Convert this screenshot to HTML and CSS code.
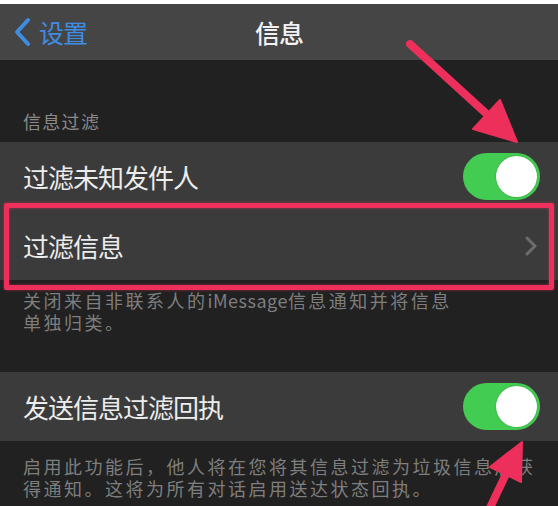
FILE: index.html
```html
<!DOCTYPE html>
<html lang="zh-CN">
<head>
<meta charset="utf-8">
<title>信息</title>
<link rel="stylesheet" href="styles.css">
</head>
<body>
<div class="screen">
  <div class="top-strip"></div>
  <header class="nav">
    <div class="back">
      <svg class="back-chevron" width="20" height="30" viewBox="0 0 20 30"><path d="M16 3 L5 15 L16 27" fill="none" stroke="#3f8de2" stroke-width="4" stroke-linecap="round" stroke-linejoin="round"/></svg>
      <span class="back-label">设置</span>
    </div>
    <div class="nav-title">信息</div>
    <div></div>
  </header>

  <div class="section-header">信息过滤</div>
  <div class="group">
    <div class="row">
      <span class="row-label">过滤未知发件人</span>
      <span class="toggle"><span class="knob"></span></span>
    </div>
    <div class="row row-highlight">
      <span class="row-label">过滤信息</span>
      <svg class="chevron" width="14" height="20" viewBox="0 0 14 20"><path d="M3 2 L11 10 L3 18" fill="none" stroke="#6c6c6c" stroke-width="3" stroke-linecap="round" stroke-linejoin="round"/></svg>
      <div class="annot-box"></div>
    </div>
  </div>
  <div class="footer footer-first">关闭来自非联系人的<span class="latin">iMessage</span>信息通知并将信息<br>单独归类。</div>

  <div class="group group-second">
    <div class="row">
      <span class="row-label">发送信息过滤回执</span>
      <span class="toggle"><span class="knob"></span></span>
    </div>
  </div>
  <div class="footer footer-second">启用此功能后，他人将在您将其信息过滤为垃圾信息后获<br>得通知。这将为所有对话启用送达状态回执。</div>

  <svg class="arrows" width="558" height="506" viewBox="0 0 558 506">
    <g fill="#ec2f5b" stroke="#ec2f5b" stroke-linejoin="round">
      <line x1="410" y1="44" x2="490" y2="117" stroke-width="8" stroke-linecap="round"/>
      <polygon points="517,142 473,129 500,100" stroke-width="2"/>
      <line x1="488" y1="512" x2="507" y2="472" stroke-width="8"/>
      <polygon points="522,442 521,482 490,467" stroke-width="2"/>
    </g>
  </svg>
</div>
</body>
</html>
```
FILE: styles.css
```css
html, body {
  margin: 0;
  padding: 0;
}
body {
  background: #222222;
  font-family: "Noto Sans CJK SC", "Noto Sans", sans-serif;
}
.screen {
  position: relative;
  width: 558px;
  height: 506px;
  overflow: hidden;
  background: #212121;
}
.top-strip {
  height: 4px;
  background: #ffffff;
}
.nav {
  height: 56px;
  background: #454545;
  display: grid;
  grid-template-columns: 1fr auto 1fr;
  align-items: center;
}
.back {
  display: flex;
  align-items: center;
  padding-left: 12px;
  gap: 7px;
  color: #3f8de2;
}
.back-chevron {
  display: block;
}
.back-label {
  font-size: 25px;
  letter-spacing: -1px;
  line-height: 30px;
}
.nav-title {
  color: #f2f2f2;
  font-size: 25px;
  font-weight: 500;
  letter-spacing: -1px;
  line-height: 30px;
}
.section-header {
  padding: 50px 23px 10px;
  font-size: 18px;
  line-height: 22px;
  letter-spacing: 1.3px;
  color: #8a8a8a;
}
.group {
  background: #3b3b3b;
}
.row {
  position: relative;
  height: 69px;
  display: flex;
  align-items: center;
  justify-content: space-between;
  padding: 0 18px 0 23px;
}
.row-label {
  font-size: 26px;
  letter-spacing: -1px;
  color: #ececec;
}
.toggle {
  position: relative;
  width: 77px;
  height: 47px;
  border-radius: 24px;
  background: #43cc52;
  display: flex;
  align-items: center;
  justify-content: flex-end;
  padding-right: 3px;
  box-sizing: border-box;
}
.knob {
  width: 41px;
  height: 41px;
  border-radius: 50%;
  background: #ffffff;
  box-shadow: 0 0 2px rgba(0,0,0,0.25);
}
.chevron {
  display: block;
  margin-right: 2px;
}
.annot-box {
  position: absolute;
  top: -8px;
  bottom: -10px;
  left: 4px;
  right: 4px;
  border: 5px solid #ec2f5b;
  border-radius: 2px;
  box-shadow: 0 0 3px rgba(236,47,91,0.6), inset 0 0 3px rgba(236,47,91,0.6);
  pointer-events: none;
}
.footer {
  padding: 0 23px;
  font-size: 18px;
  line-height: 22px;
  letter-spacing: 2.5px;
  white-space: nowrap;
  color: #7e7e7e;
}
.footer .latin {
  letter-spacing: 0.5px;
}
.footer-first {
  padding-top: 9px;
  padding-bottom: 39px;
}
.footer-second {
  padding-top: 14px;
}
.arrows {
  position: absolute;
  left: 0;
  top: 0;
  pointer-events: none;
}
```
